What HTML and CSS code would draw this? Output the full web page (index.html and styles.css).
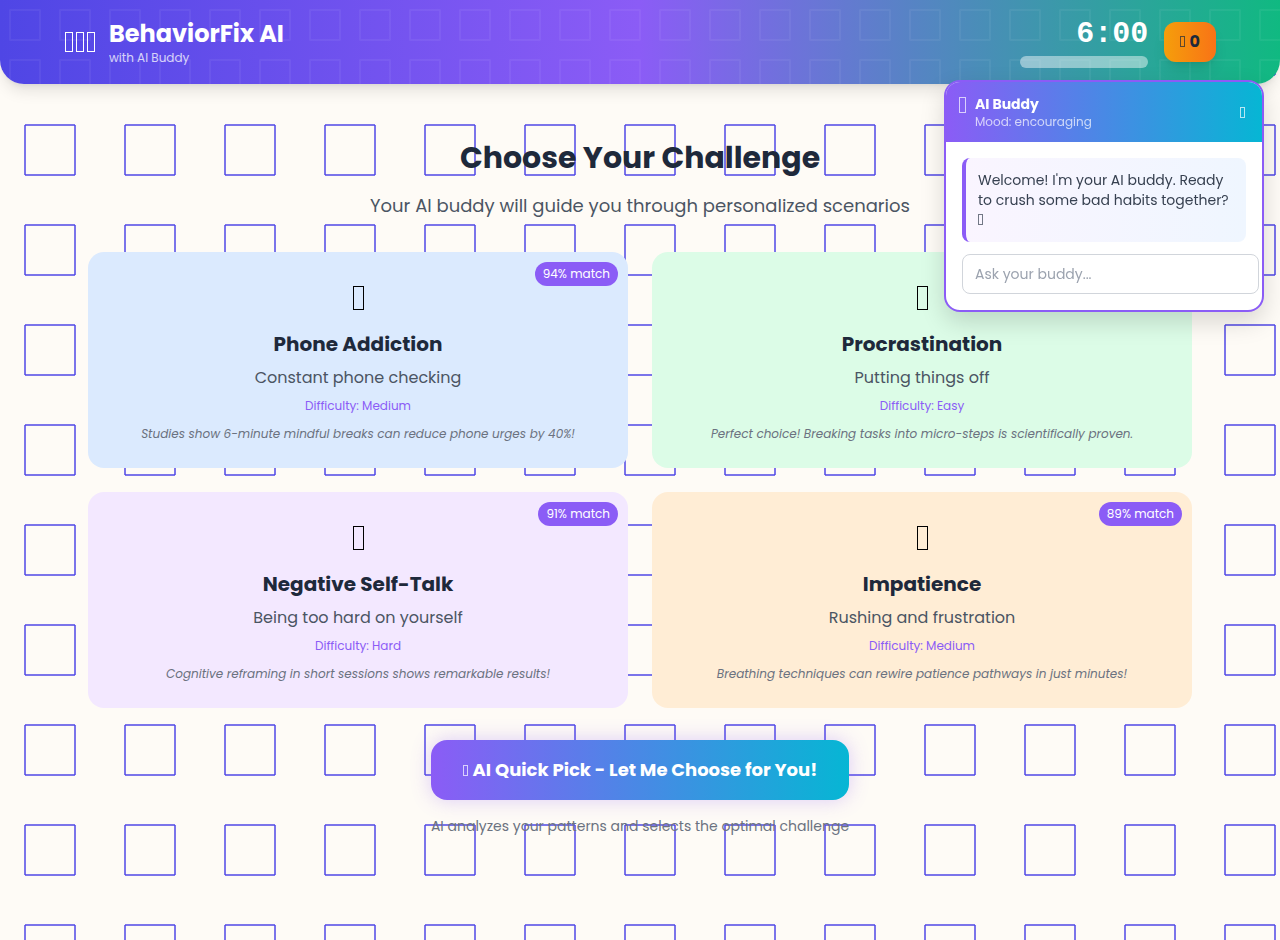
FILE: index.html
```html
<!DOCTYPE html>
<html lang="en">
<head>
	<meta charset="UTF-8">
	<meta name="viewport" content="width=device-width, initial-scale=1.0">
	<title>BehaviorFix AI</title>
	<link rel="stylesheet" href="styles.css">
</head>
<body>
	<header class="header">
		<div class="header-inner">
			<div class="brand">
				<div class="brand-icon">
					<span class="glyph glyph-lg"></span>
					<span class="glyph glyph-lg"></span>
					<span class="glyph glyph-lg"></span>
				</div>
				<div>
					<h1 class="brand-name">BehaviorFix AI</h1>
					<p class="brand-sub">with AI Buddy</p>
				</div>
			</div>
			<div class="status">
				<div class="timer">
					<div class="timer-value">6:00</div>
					<div class="timer-bar"></div>
				</div>
				<div class="score"><span class="glyph"></span> 0</div>
			</div>
		</div>
	</header>

	<!-- AI buddy chat -->
	<aside class="buddy">
		<div class="buddy-header">
			<div class="buddy-info">
				<span class="glyph glyph-md"></span>
				<div>
					<div class="buddy-name">AI Buddy</div>
					<div class="buddy-mood">Mood: encouraging</div>
				</div>
			</div>
			<button type="button" class="buddy-toggle"><span class="glyph"></span></button>
		</div>
		<div class="buddy-body">
			<p class="buddy-message">Welcome! I'm your AI buddy. Ready to crush some bad habits together? <span class="glyph"></span></p>
			<input type="text" class="buddy-input" placeholder="Ask your buddy..." aria-label="Ask your buddy...">
		</div>
	</aside>

	<main class="main">
		<h2 class="title">Choose Your Challenge</h2>
		<p class="subtitle">Your AI buddy will guide you through personalized scenarios</p>

		<div class="cards">
			<button type="button" class="card card-blue">
				<span class="card-match">94% match</span>
				<span class="card-icon"><span class="glyph glyph-xl"></span></span>
				<span class="card-title">Phone Addiction</span>
				<span class="card-text">Constant phone checking</span>
				<span class="card-level">Difficulty: Medium</span>
				<span class="card-note">Studies show 6-minute mindful breaks can reduce phone urges by 40%!</span>
			</button>
			<button type="button" class="card card-green">
				<span class="card-icon"><span class="glyph glyph-xl"></span></span>
				<span class="card-title">Procrastination</span>
				<span class="card-text">Putting things off</span>
				<span class="card-level">Difficulty: Easy</span>
				<span class="card-note">Perfect choice! Breaking tasks into micro-steps is scientifically proven.</span>
			</button>
			<button type="button" class="card card-purple">
				<span class="card-match">91% match</span>
				<span class="card-icon"><span class="glyph glyph-xl"></span></span>
				<span class="card-title">Negative Self-Talk</span>
				<span class="card-text">Being too hard on yourself</span>
				<span class="card-level">Difficulty: Hard</span>
				<span class="card-note">Cognitive reframing in short sessions shows remarkable results!</span>
			</button>
			<button type="button" class="card card-orange">
				<span class="card-match">89% match</span>
				<span class="card-icon"><span class="glyph glyph-xl"></span></span>
				<span class="card-title">Impatience</span>
				<span class="card-text">Rushing and frustration</span>
				<span class="card-level">Difficulty: Medium</span>
				<span class="card-note">Breathing techniques can rewire patience pathways in just minutes!</span>
			</button>
		</div>

		<div class="quick">
			<button type="button" class="quick-btn"><span class="glyph"></span> AI Quick Pick - Let Me Choose for You!</button>
			<p class="quick-note">AI analyzes your patterns and selects the optimal challenge</p>
		</div>
	</main>
</body>
</html>
```
FILE: styles.css
```css
* {
	box-sizing: border-box;
	margin: 0;
	padding: 0;
}

body {
	min-height: 100vh;
	font-family: Poppins, "Open Sans", sans-serif;
	font-size: 16px;
	line-height: 24px;
	color: #1e293b;
	background-color: #fefbf6;
	background-image: url("data:image/svg+xml,%3Csvg xmlns='http://www.w3.org/2000/svg' width='100' height='100'%3E%3Cg stroke='%234f46e5' stroke-width='2' stroke-opacity='0.75'%3E%3Cpath d='M25 25h50'/%3E%3Cpath d='M75 25v50'/%3E%3Cpath d='M75 75h-50'/%3E%3Cpath d='M25 75v-50'/%3E%3C/g%3E%3C/svg%3E");
}

button,
input {
	font-family: inherit;
}

button {
	border: none;
	cursor: pointer;
}

/* outlined box icon */
.glyph {
	display: inline-block;
	width: 5px;
	height: 11px;
	margin-right: 1px;
	border: 1px solid currentColor;
	opacity: 0.7;
}

.glyph-md {
	width: 7px;
	height: 16px;
	margin: 3px 1px 0;
}

.glyph-lg {
	width: 8px;
	height: 20px;
	margin: 0 2px 0 1px;
	opacity: 1;
}

.glyph-xl {
	width: 11px;
	height: 24px;
	margin: 0;
	opacity: 1;
}

/* header */
.header {
	padding: 16px;
	color: #fff;
	background-image:
		url("data:image/svg+xml,%3Csvg xmlns='http://www.w3.org/2000/svg' width='50' height='50'%3E%3Cpath d='M10 10h30v30h-30z' fill='none' stroke='white' stroke-width='2' stroke-linejoin='bevel' stroke-opacity='0.05'/%3E%3C/svg%3E"),
		linear-gradient(90deg, #4f46e5, #8b5cf6, #10b981);
	border-radius: 0 0 24px 24px;
	box-shadow: 0 10px 15px -3px rgba(0, 0, 0, 0.1), 0 4px 6px -4px rgba(0, 0, 0, 0.1);
}

.header-inner {
	display: flex;
	justify-content: space-between;
	align-items: center;
	max-width: 1152px;
	margin: 0 auto;
}

.brand {
	display: flex;
	align-items: center;
	gap: 12px;
}

.brand-icon {
	display: flex;
}

.brand-name {
	font-size: 24px;
	line-height: 32px;
}

.brand-sub {
	font-size: 12px;
	line-height: 16px;
	opacity: 0.75;
}

.status {
	display: flex;
	align-items: center;
	gap: 16px;
}

.timer {
	text-align: right;
}

.timer-value {
	font-family: "Liberation Mono", monospace;
	font-size: 30px;
	font-weight: 700;
	line-height: 36px;
}

.timer-bar {
	width: 128px;
	height: 12px;
	margin-top: 4px;
	border-radius: 6px;
	background: rgba(255, 255, 255, 0.45);
}

.score {
	padding: 8px 16px;
	border-radius: 12px;
	font-weight: 700;
	color: #1e293b;
	background: linear-gradient(90deg, #f59e0b, #f97316);
	box-shadow: 0 10px 15px -3px rgba(0, 0, 0, 0.1), 0 4px 6px -4px rgba(0, 0, 0, 0.1);
}

/* buddy chat */
.buddy {
	position: fixed;
	top: 80px;
	right: 16px;
	z-index: 10;
	width: 320px;
	overflow: hidden;
	border: 2px solid #8b5cf6;
	border-radius: 16px;
	background: #fff;
	box-shadow: 0 10px 25px rgba(0, 0, 0, 0.15);
}

.buddy-header {
	display: flex;
	justify-content: space-between;
	align-items: center;
	padding: 12px;
	color: #fff;
	background: linear-gradient(90deg, #8b5cf6, #06b6d4);
}

.buddy-info {
	display: flex;
	gap: 8px;
}

.buddy-name {
	font-size: 14px;
	font-weight: 700;
	line-height: 20px;
}

.buddy-mood {
	font-size: 12px;
	line-height: 16px;
	opacity: 0.7;
}

.buddy-toggle {
	display: flex;
	padding: 4px;
	color: #fff;
	background: none;
}

.buddy-body {
	display: flex;
	flex-direction: column;
	gap: 12px;
	padding: 16px;
}

.buddy-message {
	padding: 12px;
	border-left: 4px solid #8b5cf6;
	border-radius: 8px;
	font-size: 14px;
	line-height: 20px;
	color: #374151;
	background: linear-gradient(90deg, #faf5ff, #eff6ff);
}

.buddy-input {
	width: 297px;
	padding: 9px 12px;
	border: 1px solid #d1d5db;
	border-radius: 8px;
	font-size: 14px;
	line-height: 20px;
	background: #fff;
}

.buddy-input::placeholder {
	color: #9ca3af;
}

/* challenges */
.main {
	max-width: 1152px;
	margin: 0 auto;
	padding: 56px 24px 24px;
	text-align: center;
}

.title {
	margin-bottom: 16px;
	font-size: 30px;
	line-height: 36px;
}

.subtitle {
	margin-bottom: 32px;
	font-size: 18px;
	line-height: 28px;
	color: #4b5563;
}

.cards {
	display: grid;
	grid-template-columns: 1fr 1fr;
	gap: 24px;
}

.card {
	position: relative;
	display: flex;
	flex-direction: column;
	align-items: center;
	padding: 26px;
	border-radius: 16px;
	color: #1e293b;
}

.card-blue {
	background: #dbeafe;
}

.card-green {
	background: #dcfce7;
}

.card-purple {
	background: #f3e8ff;
}

.card-orange {
	background: #ffedd5;
}

.card-match {
	position: absolute;
	top: 10px;
	right: 10px;
	padding: 4px 8px;
	border-radius: 12px;
	font-size: 12px;
	line-height: 16px;
	color: #fff;
	background: #8b5cf6;
}

.card-icon {
	display: flex;
	align-items: center;
	height: 40px;
	margin-bottom: 12px;
	color: #000;
}

.card-title {
	margin-bottom: 8px;
	font-size: 20px;
	font-weight: 700;
	line-height: 28px;
}

.card-text {
	margin-bottom: 8px;
	font-size: 16px;
	line-height: 24px;
	color: #4b5563;
}

.card-level {
	margin-bottom: 12px;
	font-size: 12px;
	line-height: 16px;
	color: #8b5cf6;
}

.card-note {
	font-size: 12px;
	font-style: italic;
	line-height: 16px;
	color: #6b7280;
}

.quick {
	margin-top: 32px;
}

.quick-btn {
	padding: 16px 32px;
	border-radius: 16px;
	font-size: 18px;
	font-weight: 700;
	line-height: 28px;
	color: #fff;
	background: linear-gradient(90deg, #8b5cf6, #06b6d4);
	box-shadow: 0 0 20px rgba(139, 92, 246, 0.3);
}

.quick-note {
	margin-top: 16px;
	font-size: 14px;
	line-height: 20px;
	color: #6b7280;
}
```
